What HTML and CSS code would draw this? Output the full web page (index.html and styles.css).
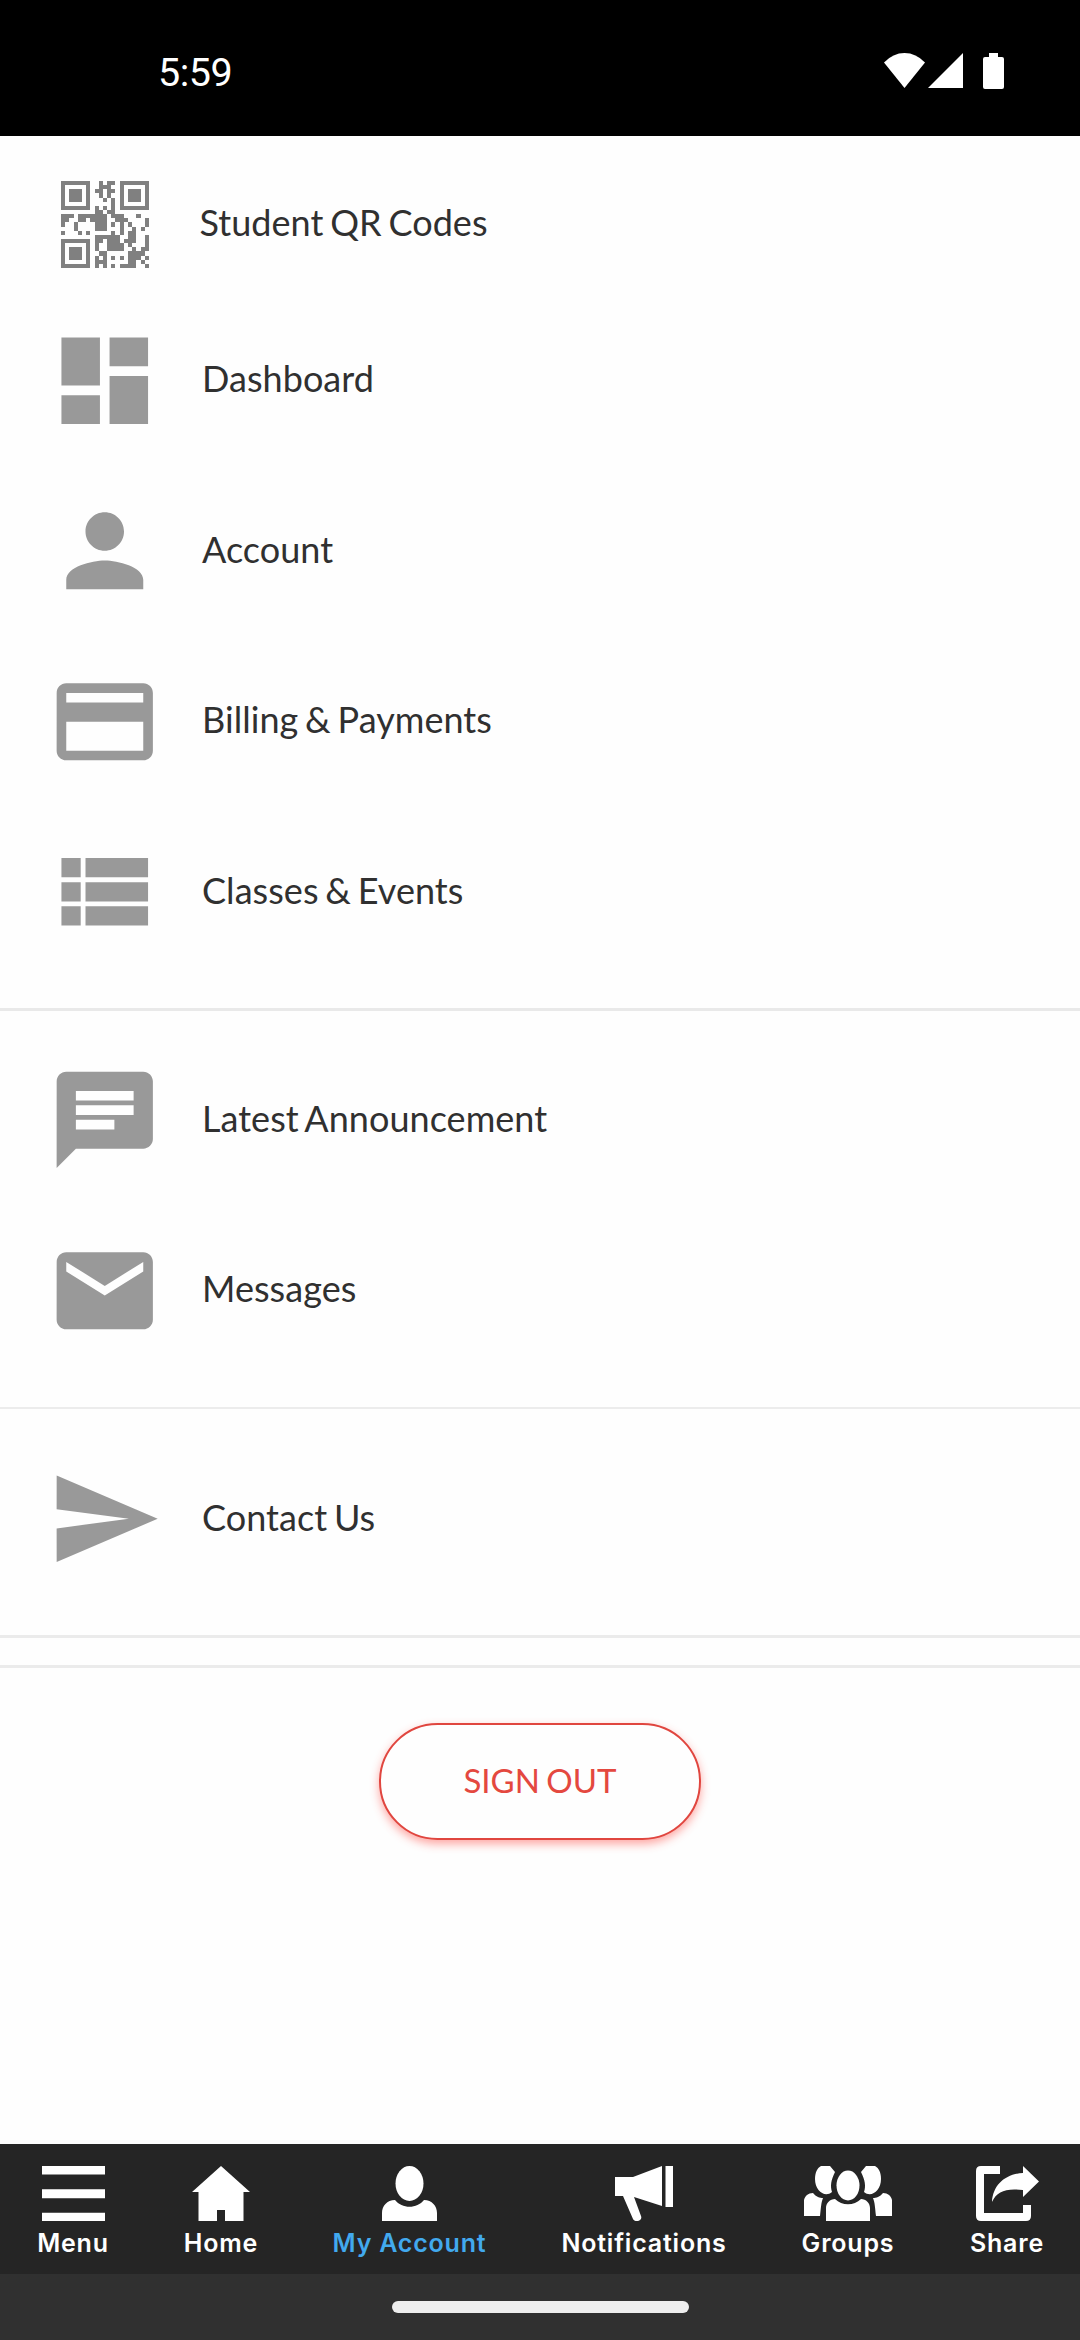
FILE: index.html
```html
<!DOCTYPE html>
<html lang="en">
<head>
<meta charset="utf-8">
<title>My Account</title>
<link rel="stylesheet" href="styles.css">
</head>
<body>
<div class="screen">
  <header class="status">
    <span class="time">5:59</span>
    <svg class="status-icons" viewBox="0 0 122 38" fill="#fff">
      <path d="M0 9.5Q9 0 20.500 0T41 9.500L20.500 35Z"/>
      <path d="M79 0V35H44Z"/>
      <path d="M105 0h9v4h4q2 0 2 2v28q0 2-2 2h-17q-2 0-2-2V6q0-2 2-2h4z"/>
    </svg>
  </header>
  <main class="content">
    <nav class="group group-main">
      <a class="row row-qr">
        <svg class="qr" viewBox="0 0 21 21" preserveAspectRatio="none" shape-rendering="crispEdges">
          <path fill-rule="evenodd" d="M0 0h7v7H0zM1 1v5h5V1zM2 2h3v3H2zM14 0h7v7h-7zM15 1v5h5V1zM16 2h3v3h-3zM0 14h7v7H0zM1 15v5h5v-5zM2 16h3v3H2z"/>
          <path d="M9 0h1v1h-1zM11 0h2v1h-2zM9 1h3v1h-3zM8 2h2v1h-2zM11 2h2v1h-2zM9 3h1v1h-1zM11 3h1v1h-1zM10 4h1v1h-1zM12 4h1v4h-1zM8 6h1v1h-1zM10 6h1v1h-1zM8 7h2v1h-2zM11 7h1v1h-1z"/>
          <path d="M0 8h3v1H0zM4 8h7v1H4zM12 8h3v1h-3zM18 8h1v1h-1zM0 9h2v1H0zM4 9h2v1H4zM7 9h4v1H7zM13 9h3v1h-3zM20 9h1v2h-1zM0 10h1v1H0zM3 10h1v2H3zM8 10h3v2H8zM12 10h1v1h-1zM14 10h1v3h-1zM16 10h1v1h-1zM17 11h1v1h-1zM19 11h1v1h-1zM0 12h1v1H0zM4 12h1v1H4zM6 12h1v1H6zM12 12h1v1h-1zM16 12h2v1h-2z"/>
          <path d="M8 13h4v1H8zM12 13h2v1h-2zM16 13h2v1h-2zM20 13h1v4h-1zM8 14h2v1H8zM11 14h3v1h-3zM15 14h3v1h-3zM8 15h1v2H8zM11 15h2v2h-2zM13 15h2v1h-2zM16 15h1v1h-1zM14 16h1v1h-1zM17 16h1v1h-1zM19 16h1v2h-1zM9 17h2v1H9zM13 16h1v1h-1zM16 17h2v4h-2zM18 17h1v2h-1zM8 18h1v3H8zM10 17h1v4h-1zM12 18h1v1h-1zM9 19h1v1H9zM14 18h1v1h-1zM20 18h1v1h-1zM19 19h1v1h-1zM12 20h1v1h-1zM14 20h2v1h-2zM20 20h1v1h-1z"/>
        </svg>
        <span>Student QR Codes</span>
      </a>
      <a class="row"><svg class="icon" viewBox="0 0 24 24"><path d="M3 13h8V3H3zM3 21h8v-6H3zM13 21h8V11h-8zM13 3v6h8V3z"/></svg><span>Dashboard</span></a>
      <a class="row"><svg class="icon" viewBox="0 0 24 24"><path d="M12 12c2.210 0 4-1.790 4-4s-1.790-4-4-4-4 1.790-4 4 1.790 4 4 4zm0 2c-2.670 0-8 1.340-8 4v2h16v-2c0-2.660-5.330-4-8-4z"/></svg><span>Account</span></a>
      <a class="row"><svg class="icon" viewBox="0 0 24 24"><path d="M20 4H4c-1.110 0-1.990.89-1.990 2L2 18c0 1.110.89 2 2 2h16c1.110 0 2-.89 2-2V6c0-1.110-.89-2-2-2zm0 14H4v-6h16v6zm0-10H4V6h16v2z"/></svg><span>Billing &amp; Payments</span></a>
      <a class="row"><svg class="icon" viewBox="0 0 24 24"><path d="M3 14h4v-4H3zM3 19h4v-4H3zM3 9h4V5H3zM8 14h13v-4H8zM8 19h13v-4H8zM8 5v4h13V5z"/></svg><span>Classes &amp; Events</span></a>
    </nav>
    <nav class="group group-news">
      <a class="row"><svg class="icon" viewBox="0 0 24 24"><path d="M20 2H4c-1.100 0-1.990.9-1.990 2L2 22l4-4h14c1.100 0 2-.9 2-2V4c0-1.100-.9-2-2-2zM6 9h12v2H6V9zm8 5H6v-2h8v2zm4-6H6V6h12v2z"/></svg><span>Latest Announcement</span></a>
      <a class="row"><svg class="icon" viewBox="0 0 24 24"><path d="M20 4H4c-1.100 0-1.990.9-1.990 2L2 18c0 1.100.9 2 2 2h16c1.100 0 2-.9 2-2V6c0-1.100-.9-2-2-2zm0 4l-8 5-8-5V6l8 5 8-5v2z"/></svg><span>Messages</span></a>
    </nav>
    <nav class="group group-contact">
      <a class="row"><svg class="icon" viewBox="0 0 24 24"><path d="M2.010 21L23 12 2.010 3 2 10l15 2-15 2z"/></svg><span>Contact Us</span></a>
    </nav>
    <div class="spacer"></div>
    <button class="sign-out">SIGN OUT</button>
  </main>
  <nav class="tabs">
    <a class="tab tab-menu"><svg width="63" height="55" viewBox="0 0 63 55"><path d="M0 0h63v8.500H0zM0 23.200h63v9H0zM0 46.700h63V55H0z"/></svg><span>Menu</span></a>
    <a class="tab tab-home"><svg width="58" height="55" viewBox="0 0 58 55"><path d="M29 0L58 26h-6.500v29H33V44h-8v11H6.500V26H0z"/></svg><span>Home</span></a>
    <a class="tab tab-account active"><svg width="55" height="55" viewBox="0 0 55 55"><ellipse cx="27.500" cy="17.500" rx="14" ry="17.500"/><path d="M0 55V47C0 40 5 34 13 34c7 9 22 9 29 0 8 0 13 6 13 13v8z"/></svg><span>My Account</span></a>
    <a class="tab tab-notifications"><svg width="58" height="55" viewBox="0 0 58 55"><path d="M0 11h18L47 0v40L19 31l7 19c2 5-6 7-8 3L8 30H0zM50.500 0H58v41h-7.500z"/></svg><span>Notifications</span></a>
    <a class="tab tab-groups"><svg width="88" height="55" viewBox="0 0 88 55"><path d="M17 0h9l5 6c-4 8-5 14-3 20-7 6-17-1-17-13C11 7 13 2 17 0zM71 0h-9l-5 6c4 8 5 14 3 20 7 6 17-1 17-13 0-6-2-11-6-13z"/><ellipse cx="44" cy="19.500" rx="11.500" ry="15"/><path d="M22 55V42c0-5 4-9 9-9 7 7 19 7 26 0 5 0 9 4 9 9v13zM0 50V34c1-4 4-7 9-7 3 4 7 5 10 5-2 5-2 10-3 18zM88 50V34c-1-4-4-7-9-7-3 4-7 5-10 5 2 5 2 10 3 18z"/></svg><span>Groups</span></a>
    <a class="tab tab-share"><svg width="63" height="55" viewBox="0 0 63 55"><path d="M24 0v8H8v39h39v-8h8v11q0 5-5 5H5q-5 0-5-5V5q0-5 5-5z"/><path d="M16 36C17 19 29 8 47 7V0l16 15.500L47 31v-7c-17-2-26 1-31 12z"/></svg><span>Share</span></a>
  </nav>
  <footer class="system"><div class="pill"></div></footer>
</div>
</body>
</html>
```
FILE: styles.css
```css
* { box-sizing: border-box; }
body { margin: 0; background: #fefefe; }
.screen { width: 1080px; height: 2340px; display: flex; flex-direction: column; overflow: hidden; font-family: Lato, sans-serif; }
.status { height: 136px; flex: none; background: #000; color: #fff; display: flex; justify-content: space-between; align-items: flex-start; padding: 50px 74px 0 158px; }
.time { font: 400 39.500px/46px Roboto, sans-serif; letter-spacing: -0.5px; }
.status-icons { width: 122px; height: 38px; margin-top: 3px; }
.content { flex: 1; display: flex; flex-direction: column; }
.group { flex: none; border-bottom: 3px solid #e9e9e9; padding: 0 46.500px; }
.group-main { height: 875px; }
.group-news { height: 398px; border-bottom: 2px solid #ececec; padding-top: 23.500px; }
.group-contact { height: 229px; padding-top: 24.800px; border-color: #ebebeb; }
.row { height: 170.500px; display: flex; align-items: center; gap: 40px; color: #303030; font-size: 36px; line-height: 44px; letter-spacing: .05px; word-spacing: -2.500px; }
.row span { position: relative; top: -2px; white-space: nowrap; }
.row-qr { height: 159px; padding: 18px 0 0 14.500px; gap: 50.500px; }
.row-qr span { top: -3px; }
.icon { width: 115.500px; height: 115.500px; flex: none; fill: #999; }
.qr { width: 88px; height: 87px; flex: none; fill: #808080; }
.spacer { height: 30px; flex: none; border-bottom: 3px solid #ebebeb; }
.sign-out { width: 322px; height: 117px; margin: 55px auto 0; padding: 0 0 4px; border: 2px solid #e0463f; border-radius: 59px; background: #fefefe; box-shadow: 0 4px 10px rgba(255, 60, 50, .45); color: #e4483f; font: 400 33px/40px Lato, sans-serif; word-spacing: -2px; }
.tabs { height: 130px; flex: none; background: #252525; display: flex; color: #fff; padding: 22px 0 0 36px; }
.tab { display: flex; flex-direction: column; align-items: center; flex: none; font: 600 25px/30px Inter, sans-serif; letter-spacing: .8px; white-space: nowrap; }
.tab svg { display: block; fill: #fff; }
.tab span { margin-top: 7px; }
.active { color: #42a9ee; }
.tab-menu { width: 74px; margin-right: 72px; }
.tab-home { width: 78px; margin-right: 72px; }
.tab-account { width: 155px; margin-right: 73px; }
.tab-notifications { width: 168px; margin-right: 72px; }
.tab-groups { width: 96px; margin-right: 72px; }
.tab-share { width: 78px; }
.system { height: 66px; flex: none; background: #303030; display: flex; justify-content: center; padding-top: 27px; }
.pill { width: 297px; height: 12px; border-radius: 6px; background: #eee; }
```
